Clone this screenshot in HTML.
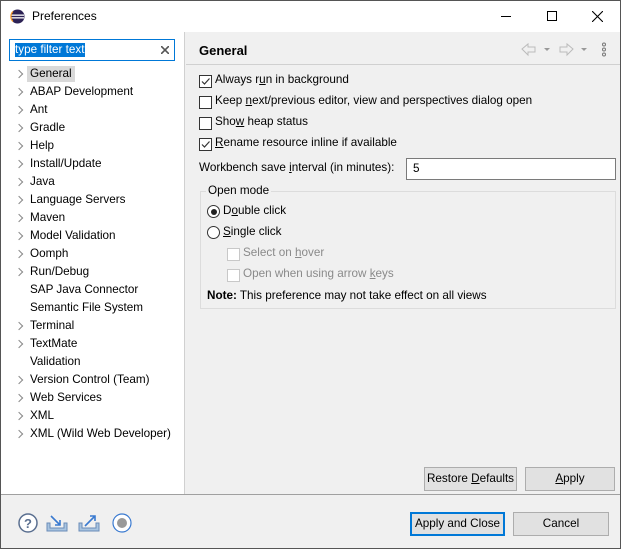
<!DOCTYPE html>
<html><head><meta charset="utf-8"><style>
*{box-sizing:border-box;margin:0;padding:0}
body{width:621px;height:549px;overflow:hidden;font-family:"Liberation Sans",sans-serif;font-size:11.7px;color:#000;background:#fff}
.win{position:absolute;left:0;top:0;width:621px;height:549px;border:1px solid #555;background:#f0f0f0}
.title{position:absolute;left:0;top:0;width:619px;height:31px;background:#fff}
.abs{position:absolute;white-space:nowrap}
.left{position:absolute;left:0;top:31px;width:184px;height:462px;background:#fff;border-right:1px solid #d0d0d0}
.item{position:absolute;left:29px;height:16px;line-height:16px;padding:0 3px;margin-left:-3px}
.arr{position:absolute;left:15px;width:6px;height:6px;border-right:1.3px solid #888;border-top:1.3px solid #888;transform:rotate(45deg)}
.cb{position:absolute;width:13px;height:13px;border:1px solid #333;background:#fff}
.cb.dis{border-color:#c8c8c8}
.btn{position:absolute;height:24px;border:1px solid #adadad;background:#e1e1e1;text-align:center;line-height:22px}
u{text-decoration:underline}
</style></head><body><div class="win">
<div class="title">
<svg class="abs" style="left:9px;top:8px" width="15" height="15"><circle cx="7.5" cy="7.5" r="7" fill="#2c2255"/><rect x="1" y="5.5" width="13" height="1.3" fill="#fff"/><rect x="1" y="8.2" width="13" height="1.3" fill="#fff"/><path d="M3 2.5 A7 7 0 0 0 3 12.5" stroke="#f7941e" stroke-width="1.2" fill="none"/></svg>
<div class="abs" style="left:31px;top:8px;font-size:12px">Preferences</div>
<div class="abs" style="left:500px;top:15px;width:10px;height:1px;background:#000"></div>
<div class="abs" style="left:546px;top:10px;width:10px;height:10px;border:1px solid #000"></div>
<svg class="abs" style="left:591px;top:10px" width="11" height="11"><path d="M0 0L11 11M11 0L0 11" stroke="#000" stroke-width="1.1"/></svg>
</div>
<div class="left">
<div class="abs" style="left:8px;top:7px;width:166px;height:22px;border:1px solid #0078d7;background:#fff">
<span class="abs" style="left:5px;top:3px;background:#0078d7;color:#fff;line-height:14px">type filter text</span>
<svg class="abs" style="left:151px;top:6px" width="8" height="8"><path d="M0 0L8 8M8 0L0 8" stroke="#555" stroke-width="1.6"/></svg>
</div>
</div>
<div id="tree"></div>
<div class="abs" style="left:185px;top:31px;width:434px;height:462px">
<div class="abs" style="left:13px;top:11px;font-weight:bold;font-size:13px">General</div>
<svg class="abs" style="left:334px;top:10px" width="90" height="16"><path d="M2 7L8 2V5H15V10H8V13Z" fill="none" stroke="#bbb"/><path d="M24 6h6l-3 3z" fill="#999"/><path d="M53 7L47 2V5H40V10H47V13Z" fill="none" stroke="#bbb"/><path d="M61 6h6l-3 3z" fill="#999"/><circle cx="84" cy="2.5" r="1.5" fill="none" stroke="#777"/><circle cx="84" cy="7.5" r="1.5" fill="none" stroke="#777"/><circle cx="84" cy="12.5" r="1.5" fill="none" stroke="#777"/></svg>
<div class="abs" style="left:0;top:32px;width:434px;height:1px;background:#d0d0d0"></div>
</div>
<div id="right"></div>
<div class="btn" style="left:423px;top:466px;width:93px">Restore <u>D</u>efaults</div>
<div class="btn" style="left:524px;top:466px;width:90px"><u>A</u>pply</div>
<div class="abs" style="left:0;top:493px;width:619px;height:1px;background:#a0a0a0"></div>
<svg class="abs" style="left:15px;top:511px" width="120" height="22">
<circle cx="12" cy="11" r="9" fill="#fff" stroke="#5a6f90" stroke-width="1.5"/><text x="8" y="16" font-size="13" font-weight="bold" fill="#5a6f90" font-family="Liberation Sans">?</text>
<path d="M31 11v8h20v-8h-3v5h-14v-5z" fill="#a8c4e0" stroke="#6a8cb8"/><path d="M35 4l9 9M44 8v5h-5" stroke="#3a7ad0" stroke-width="1.6" fill="none"/>
<path d="M63 11v8h20v-8h-3v5h-14v-5z" fill="#a8c4e0" stroke="#6a8cb8"/><path d="M69 14l10-10M74 4h5v5" stroke="#3a7ad0" stroke-width="1.6" fill="none"/>
<circle cx="106" cy="11" r="9" fill="#fff" stroke="#3a7ad0" stroke-width="1.2"/><circle cx="106" cy="11" r="5" fill="#999"/>
</svg>
<div class="btn" style="left:409px;top:511px;width:95px;border:2px solid #0078d7;line-height:20px">Apply and Close</div>
<div class="btn" style="left:512px;top:511px;width:96px">Cancel</div>
</div>
<script>
var items=[["General",1],["ABAP Development",1],["Ant",1],["Gradle",1],["Help",1],["Install/Update",1],["Java",1],["Language Servers",1],["Maven",1],["Model Validation",1],["Oomph",1],["Run/Debug",1],["SAP Java Connector",0],["Semantic File System",0],["Terminal",1],["TextMate",1],["Validation",0],["Version Control (Team)",1],["Web Services",1],["XML",1],["XML (Wild Web Developer)",1]];
var h="";items.forEach(function(it,i){var y=65+i*18;if(it[1])h+='<div class="arr" style="top:'+(y+5)+'px"></div>';h+='<div class="item" style="top:'+y+'px;'+(i==0?'background:#d9d9d9':'')+'">'+it[0]+'</div>';});
document.getElementById("tree").innerHTML=h;
var r="";
function cb(x,y,c,t,d){r+='<div class="cb'+(d?' dis':'')+'" style="left:'+x+'px;top:'+(y-6)+'px">'+(c?'<svg width="11" height="11" style="position:absolute;left:0;top:0"><path d="M2 5.5l2.5 2.5 5-5.5" stroke="#333" stroke-width="1.2" fill="none"/></svg>':'')+'</div><div class="abs" style="left:'+(x+16)+'px;top:'+(y-8)+'px;'+(d?'color:#8a8a8a':'')+'">'+t+'</div>';}
cb(198,80,1,'Always r<u>u</u>n in background');cb(198,101,0,'Keep <u>n</u>ext/previous editor, view and perspectives dialog open');cb(198,122,0,'Sho<u>w</u> heap status');cb(198,143,1,'<u>R</u>ename resource inline if available');
r+='<div class="abs" style="left:198px;top:160px">Workbench save <u>i</u>nterval (in minutes):</div><div class="abs" style="left:405px;top:157px;width:210px;height:22px;border:1px solid #7a7a7a;background:#fff;padding:3px 6px">5</div>';
r+='<div class="abs" style="left:199px;top:190px;width:416px;height:118px;border:1px solid #dcdcdc"></div><div class="abs" style="left:205px;top:183px;background:#f0f0f0;padding:0 2px">Open mode</div>';
r+='<div class="abs" style="left:206px;top:204px;width:13px;height:13px;border-radius:50%;border:1px solid #333;background:#fff"><div class="abs" style="left:2.5px;top:2.5px;width:6px;height:6px;border-radius:50%;background:#222"></div></div><div class="abs" style="left:222px;top:203px">D<u>o</u>uble click</div>';
r+='<div class="abs" style="left:206px;top:225px;width:13px;height:13px;border-radius:50%;border:1px solid #333;background:#fff"></div><div class="abs" style="left:222px;top:224px"><u>S</u>ingle click</div>';
cb(226,253,0,'Select on <u>h</u>over',1);cb(226,274,0,'Open when using arrow <u>k</u>eys',1);
r+='<div class="abs" style="left:206px;top:288px"><b>Note:</b> This preference may not take effect on all views</div>';
document.getElementById("right").innerHTML=r;
</script>
</body></html>
